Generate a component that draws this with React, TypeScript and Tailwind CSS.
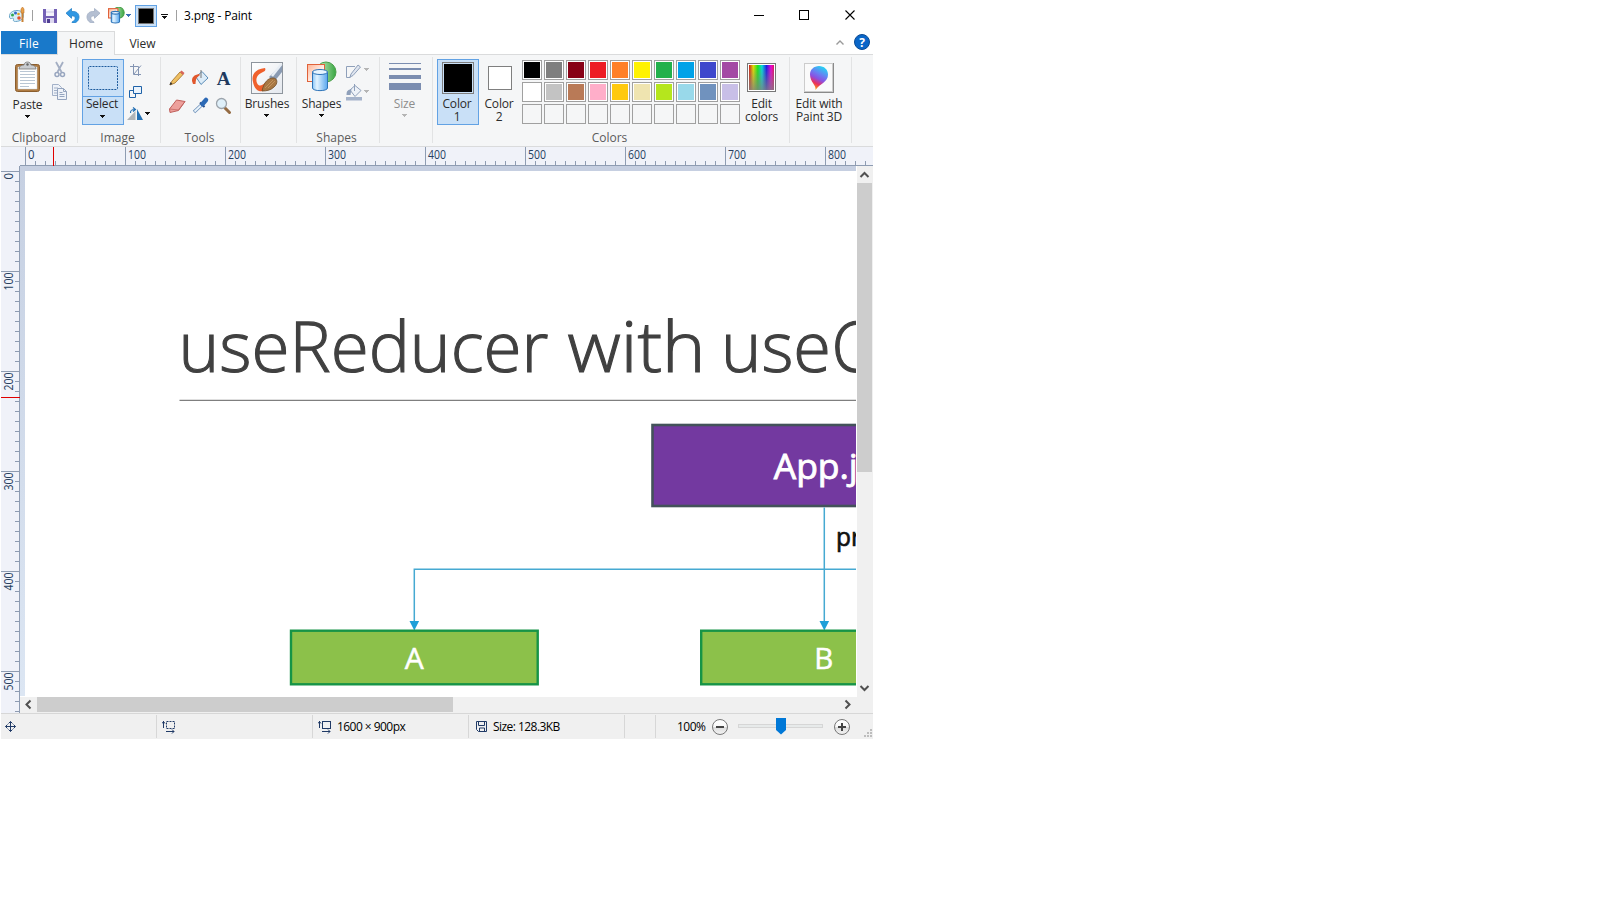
import React from "react";

type IconProps = { x: number; y: number; w: number; h: number; className?: string; children: React.ReactNode };

function Icon({ x, y, w, h, className = "", children }: IconProps) {
  return (
    <svg width={w} height={h} viewBox={`${x} ${y} ${w} ${h}`} fill="none" className={`block shrink-0 ${className}`}>
      {children}
    </svg>
  );
}

function Arrow({ className = "text-[#111]" }: { className?: string }) {
  return (
    <svg width="5" height="3" viewBox="0 0 5 3" className={`block shrink-0 ${className}`} shapeRendering="crispEdges">
      <path d="M0 0H5V1H4V2H3V3H2V2H1V1H0Z" fill="currentColor" />
    </svg>
  );
}

function Sep() {
  return <div className="mt-[2px] h-[86px] w-px shrink-0 bg-[#e2e3e4]" />;
}

function Group({ label, width, shift = "", children }: { label?: string; width: string; shift?: string; children: React.ReactNode }) {
  return (
    <div className={`flex h-[91px] shrink-0 flex-col ${width}`}>
      <div className="flex h-[75px] pt-[4px]">{children}</div>
      <div className={`h-[15px] text-center leading-[15px] text-[#5b5b5b] ${shift}`}>{label}</div>
    </div>
  );
}

function Caption({ children, className = "" }: { children: React.ReactNode; className?: string }) {
  return <div className={`flex flex-col items-center leading-[13px] tracking-[-0.15px] whitespace-nowrap ${className}`}>{children}</div>;
}

const palette: string[][] = [
  ["#000000", "#7f7f7f", "#880015", "#ed1c24", "#ff7f27", "#fff200", "#22b14c", "#00a2e8", "#3f48cc", "#a349a4"],
  ["#ffffff", "#c3c3c3", "#b97a57", "#ffaec9", "#ffc90e", "#efe4b0", "#b5e61d", "#99d9ea", "#7092be", "#c8bfe7"],
  ["", "", "", "", "", "", "", "", "", ""],
];

function ShapesGlyph() {
  return (
    <>
      <circle cx="326" cy="72" r="10" fill="url(#gGreen)" stroke="#4aa04a" />
      <rect x="307.500" y="64.500" width="17" height="17" fill="url(#gOrange)" stroke="#e0623a" />
      <path d="M312.500 72v16c0 3.500 15 3.500 15 0V72z" fill="url(#gBlue)" stroke="#2e74b8" />
      <ellipse cx="320" cy="72" rx="7.500" ry="2.500" fill="#e8f5ff" stroke="#2e74b8" />
    </>
  );
}

function Defs() {
  return (
    <defs>
      <linearGradient id="gGreen"><stop offset="0" stopColor="#d8f4cf" /><stop offset="1" stopColor="#37a642" /></linearGradient>
      <linearGradient id="gOrange" x2="1" y2="1"><stop offset="0" stopColor="#ffb394" /><stop offset=".6" stopColor="#fff3ee" /><stop offset="1" stopColor="#fff" /></linearGradient>
      <linearGradient id="gBlue"><stop offset="0" stopColor="#8bc6f7" /><stop offset=".3" stopColor="#e2f3ff" /><stop offset="1" stopColor="#58a7ee" /></linearGradient>
      <linearGradient id="gRainbow"><stop offset="0" stopColor="#d01818" /><stop offset=".17" stopColor="#e8e000" /><stop offset=".35" stopColor="#18e818" /><stop offset=".52" stopColor="#00dce0" /><stop offset=".7" stopColor="#1818e8" /><stop offset=".88" stopColor="#f000d8" /><stop offset="1" stopColor="#e01060" /></linearGradient>
      <linearGradient id="gGray" x2="0" y2="1"><stop offset="0" stopColor="#808080" stopOpacity="0" /><stop offset="1" stopColor="#808080" stopOpacity=".8" /></linearGradient>
      <linearGradient id="gPin" x1=".7" x2=".3" y2="1"><stop offset="0" stopColor="#20d8f4" /><stop offset=".35" stopColor="#6a7df2" /><stop offset=".55" stopColor="#8b50e0" /><stop offset=".75" stopColor="#e9305e" /><stop offset="1" stopColor="#ffb000" /></linearGradient>
      <linearGradient id="gBrush" x2="1" y2="1"><stop offset="0" stopColor="#fff" /><stop offset="1" stopColor="#e4e8ee" /></linearGradient>
      <linearGradient id="gBtn" x2="0" y2="1"><stop offset="0" stopColor="#fff" /><stop offset=".5" stopColor="#f8f8f8" /><stop offset=".5" stopColor="#dcdcdc" /><stop offset="1" stopColor="#f4f4f4" /></linearGradient>
    </defs>
  );
}

function TitleBar() {
  return (
    <div className="flex h-[31px] items-start">
      <Icon x={8} y={7} w={18} h={17} className="ml-[7px] mt-[7px]">
        <Defs />
        <path d="M9.500 17c-.5-4 3-6.500 7.500-6.500 4 0 6.500 2 6.500 5s-3 6-8 6c-2 0-2.500-1-2-2 .5-1.500-1-1.500-2-1-1.200.4-1.900-.3-2-1.500z" fill="#d9effa" stroke="#6aa5c8" />
        <circle cx="12.500" cy="15" r="1.500" fill="#2fa84f" /><circle cx="15.500" cy="13" r="1.500" fill="#3468c8" />
        <circle cx="18.500" cy="14" r="1.300" fill="#e8a51e" /><circle cx="19" cy="18" r="1.800" fill="#e2512d" />
        <path d="M22.500 13v9" stroke="#c98236" strokeWidth="2" /><path d="M21 13V9l1.500-2L24 9v4z" fill="#e7a14a" stroke="#c47427" strokeWidth=".6" />
      </Icon>
      <div className="ml-[6px] mt-[10px] h-[11px] w-px bg-[#a0a0a0]" />
      <Icon x={43} y={9} w={14} h={14} className="ml-[10px] mt-[9px]">
        <path d="M43 9h14v14H44l-1-1z" fill="#7461b5" /><path d="M46 9h8v7h-8z" fill="#f4f3fb" /><path d="M46 12h8" stroke="#c9c3e4" />
        <path d="M46 18h8v5h-8z" fill="#ddd8ef" /><path d="M47 19h3v4h-3z" fill="#4f3e91" />
      </Icon>
      <Icon x={65} y={8} w={15} h={15} className="ml-[8px] mt-[8px]">
        <path d="M66 13.200l5.500-4.700v3c5-.5 7.500 2 7.500 5.500s-2.500 6-6.500 6.200l-.5-1.200c2-1 3.200-2.200 3.200-3.800 0-1.700-1.200-2.400-3.700-2.400v2.500z" fill="#2f97e3" stroke="#2380c6" strokeWidth=".8" />
      </Icon>
      <Icon x={86} y={8} w={15} h={15} className="ml-[6px] mt-[8px]">
        <path d="M100 13.200l-5.500-4.700v3c-5-.5-7.500 2-7.500 5.500s2.500 6 6.500 6.200l.5-1.200c-2-1-3.200-2.200-3.200-3.800 0-1.700 1.200-2.400 3.700-2.400v2.500z" fill="#b4bfd2" stroke="#a1adc3" strokeWidth=".8" />
      </Icon>
      <svg width="17" height="17" viewBox="306.500 61.500 31 31" className="ml-[7px] mt-[7px] block shrink-0" strokeWidth="2" fill="none"><ShapesGlyph /></svg>
      <div className="ml-[1px] mt-[14px]"><Arrow className="text-[#3a6fb5]" /></div>
      <div className="ml-[4px] mt-[5px] flex h-[22px] w-[22px] items-center justify-center border border-[#62a2e4] bg-[#c9e0f7]">
        <div className="h-[16px] w-[16px] border border-[#777] bg-black" />
      </div>
      <div className="ml-[4px] mt-[14px] flex w-[7px] flex-col items-center gap-[1px]"><div className="h-px w-[7px] bg-[#111]" /><Arrow /></div>
      <div className="ml-[8px] mt-[10px] h-[11px] w-px bg-[#a0a0a0]" />
      <div className="ml-[7px] mt-[8px] leading-[16px] tracking-[-0.15px] text-black">3.png - Paint</div>
      <Icon x={753} y={9} w={103} h={12} className="ml-auto mr-[17px] mt-[9px]">
        <g stroke="#000" shapeRendering="crispEdges"><path d="M754 15.500h10" /><path d="M799.500 10.500h9v9h-9z" /></g>
        <path d="M845.500 10.500l9 9M854.500 10.500l-9 9" stroke="#000" strokeWidth="1.100" />
      </Icon>
    </div>
  );
}

function Tabs() {
  return (
    <div className="flex h-[24px] border-b border-[#dadbdc]">
      <div className="h-[23px] w-[56px] bg-[#1979ca] text-center leading-[25px] tracking-[0.2px] text-white">File</div>
      <div className="-mb-px h-[24px] w-[58px] border-x border-t border-[#dadbdc] bg-[#f5f6f7] text-center leading-[23px] text-[#2b2b2b]">Home</div>
      <div className="w-[55px] text-center leading-[25px] text-[#2b2b2b]">View</div>
      <Icon x={835} y={33} w={37} h={18} className="ml-auto mr-px mt-[2px]">
        <path d="M836.500 44.500l3.500-3.500 3.500 3.500" stroke="#9a9a9a" strokeWidth="1.400" />
        <circle cx="862" cy="42" r="7.500" fill="#0a66c8" stroke="#0a4b94" />
        <text x="862" y="46.500" textAnchor="middle" fontSize="12" fontWeight="700" fill="#fff">?</text>
      </Icon>
    </div>
  );
}

function Ribbon() {
  return (
    <div className="flex h-[92px] border-b border-[#dadbdc] bg-[#f5f6f7] text-[#2b2b2b]">
      <Group label="Clipboard" width="w-[76px]" shift="pr-0">
        <div className="ml-[6px] flex w-[41px] flex-col items-center">
          <Icon x={15} y={61} w={27} h={33} className="mt-[2px]">
            <rect x="16.500" y="64.500" width="24" height="27" rx="2" fill="#b07c43" stroke="#8b5e2e" />
            <path d="M19 67h19v22H19z" fill="#fff" stroke="#cbd5e0" strokeWidth=".5" />
            <path d="M21 71.500h15M21 74.500h15M21 77.500h15M21 80.500h15M21 83.500h15M21 86.500h9" stroke="#b9c6d4" />
            <path d="M20 69c0-3 3-4 5-4 0-4 7-4 7 0 2 0 5 1 5 4z" fill="#c9ccd0" stroke="#777" strokeWidth=".8" /><circle cx="28.500" cy="64.500" r="1.200" fill="#666" />
          </Icon>
          <Caption className="mt-[4px]">Paste</Caption>
          <div className="mt-[4px]"><Arrow /></div>
        </div>
        <div className="ml-[3px] flex flex-col">
          <Icon x={51} y={61} w={18} h={17} className="mt-[2px]">
            <path d="M56 62l5.500 10M63 62l-5.500 10" stroke="#a3aec3" strokeWidth="1.800" />
            <circle cx="57" cy="74.500" r="2" stroke="#98a6bf" strokeWidth="1.500" /><circle cx="62.500" cy="74.500" r="2" stroke="#98a6bf" strokeWidth="1.500" />
          </Icon>
          <Icon x={51} y={83} w={18} h={18} className="mt-[5px]">
            <path d="M52.500 84.500h6l3 3v8h-9z" fill="#eef2f8" stroke="#a3b1c8" /><path d="M54 88h4M54 90.500h5M54 93h4" stroke="#a3b1c8" />
            <path d="M57.500 88.500h6l3 3v8h-9z" fill="#eef2f8" stroke="#94a4be" /><path d="M63.500 88.500v3h3M59.500 92.500h3M59.500 94.500h5M59.500 96.500h5" stroke="#94a4be" />
          </Icon>
        </div>
      </Group>
      <Sep />
      <Group label="Image" width="w-[82px]" shift="pr-[3px]">
        <div className="ml-[4px] flex h-[66px] w-[42px] flex-col items-center border border-[#62a2e4] bg-[#c9e0f7]">
          <Icon x={88} y={66} w={30} h={24} className="mt-[6px]"><rect x="88.500" y="66.500" width="29" height="23" rx="1" stroke="#1c5a9c" strokeDasharray="2 1" /></Icon>
          <div className="mt-[6px] h-px w-full bg-[#62a2e4]" />
          <Caption className="mr-[2px]">Select</Caption>
          <div className="mr-px mt-[5px]"><Arrow /></div>
        </div>
        <div className="ml-[3px]">
          <Icon x={127} y={63} w={24} h={59} className="mt-[4px]">
            <path d="M133.500 64v10.500H141M130 66.500h8.500V76M134 74l7-8.500" stroke="#8495b3" />
            <path d="M133.500 86.500h8v7h-8z" fill="#eaf3fc" stroke="#1f62a8" /><path d="M133 90.500h-3.500v7h6v-3.500" stroke="#1f62a8" />
            <path d="M127 120l8.500-9v9z" fill="#b0b4b8" /><path d="M137 109v11h6z" fill="#2470b4" />
            <path d="M130.500 113c0-3 1-3.500 4-3.500M133 107.500l2.500 2-2.500 2" stroke="#2470b4" strokeWidth="1.200" />
            <path d="M145 112h5v1h-1v1h-1v1h-1v-1h-1v-1h-1z" fill="#111" />
          </Icon>
        </div>
      </Group>
      <Sep />
      <Group label="Tools" width="w-[79px]" shift="pr-[2px]">
        <Icon x={168} y={69} w={64} h={48} className="ml-[7px] mt-[9px]">
          <path d="M172 82l8-9 3 2.500-8 8.500-5 2z" fill="#efc063" stroke="#a9782f" strokeWidth=".9" /><path d="M180 73l1.500-1.500 3 2.500L183 76z" fill="#d8645a" /><path d="M169.500 86l1-3 2 2z" fill="#333" />
          <path d="M196 78l6-5.500 6 6.500-7 6.500z" fill="#dcecf8" stroke="#5b8db8" /><path d="M201 79v-8" stroke="#777" /><path d="M192 82c0-4 2-6 7-7l1 1c-4 3-4 4-4.500 9H193z" fill="#e1582d" />
          <text x="223.500" y="86" textAnchor="middle" fontSize="19" fontWeight="700" fill="#203a5f" className="font-['Liberation_Serif',serif]">A</text>
          <path d="M169.500 110l7-9 8.500 1.500-6.500 9-8.500 2z" fill="#eda09c" stroke="#c0605c" /><path d="M169.500 110l9 1 6.500-8.500" stroke="#c0605c" strokeWidth=".7" />
          <path d="M194 113l8-7.500" stroke="#7092ba" strokeWidth="3.500" /><path d="M194.500 112.500l7-6.500" stroke="#e9f4fc" strokeWidth="1.800" /><path d="M200 103.500l4.500 4.500" stroke="#274a86" strokeWidth="2" /><path d="M202.500 105l3.500-4" stroke="#2c69b5" strokeWidth="4.500" strokeLinecap="round" />
          <path d="M225 109l4.500 4.500" stroke="#946b43" strokeWidth="3" strokeLinecap="round" /><circle cx="221.500" cy="104.500" r="5" fill="#dff0fa" stroke="#9ca4ac" strokeWidth="1.300" />
        </Icon>
      </Group>
      <Sep />
      <Group width="w-[55px]">
        <div className="ml-[5px] flex w-[42px] flex-col items-center">
          <Icon x={251} y={62} w={32} h={32} className="mt-[3px]">
            <rect x="251.500" y="62.500" width="31" height="31" fill="url(#gBrush)" stroke="#8e959d" />
            <path d="M282 64L269 77l5 5 8-10z" fill="#8a9bb3" /><path d="M281.500 64l-9.500 12" stroke="#e8eef5" strokeWidth="2.500" />
            <path d="M265 68c-10 1-14 7-12 14 1 5 3 8 6 9 4 1 7-1 10-4l-3-5c-4 4-7 5-9 1-2-5 1-9 6-11 2-1 3-2 2-4z" fill="#f0602c" />
            <path d="M262 91c2-9 6-13 11-13s5 6 1 9c-3 3-7 4-12 4z" fill="#a87844" stroke="#704b25" strokeWidth=".8" /><path d="M265 88l8-8M268 88l7-7" stroke="#d0a16c" strokeWidth=".7" />
          </Icon>
          <Caption className="mt-[3px]">Brushes</Caption>
          <div className="mr-px mt-[4px]"><Arrow /></div>
        </div>
      </Group>
      <Sep />
      <Group label="Shapes" width="w-[82px]" shift="pl-[1px] pr-[4px]">
        <div className="ml-[4px] flex w-[41px] flex-col items-center">
          <Icon x={306} y={61} w={31} h={31} className="mt-[2px]"><ShapesGlyph /></Icon>
          <Caption className="mt-[5px]">Shapes</Caption>
          <div className="mt-[4px]"><Arrow /></div>
        </div>
        <Icon x={345} y={63} w={25} h={38} className="ml-[3px] mt-[4px]">
          <path d="M355 66.500h-8.500v11h4" stroke="#8fa0ba" /><path d="M350 77l1-3 7-9 2.500 2-7.500 8.500z" fill="#dfe5ef" stroke="#8fa0ba" />
          <path d="M346 97h16v3.500h-16z" fill="#a5b3ca" /><path d="M350 90l5-4.500 6 5-6 6z" fill="#eef2f8" stroke="#8fa0ba" /><path d="M354.500 91v-7" stroke="#8fa0ba" /><path d="M346.500 95c0-4 1-5 5-6l-1 6z" fill="#8fa0ba" />
          <path d="M364 68h5v1h-1v1h-1v1h-1v-1h-1v-1h-1zM364 90h5v1h-1v1h-1v1h-1v-1h-1v-1h-1z" fill="#b5b5b5" />
        </Icon>
      </Group>
      <Sep />
      <Group width="w-[52px]">
        <div className="ml-[4px] flex w-[41px] flex-col items-center text-[#8d8d8d]">
          <div className="mt-[4px] flex w-[32px] flex-col">
            <div className="h-px bg-[#7b8db0]" /><div className="mt-[4px] h-[2px] bg-[#7b8db0]" /><div className="mt-[5px] h-[4px] bg-[#7b8db0]" /><div className="mt-[4px] h-[7px] bg-[#7b8db0]" />
          </div>
          <Caption className="mt-[7px]">Size</Caption>
          <div className="mt-[4px]"><Arrow className="text-[#b5b5b5]" /></div>
        </div>
      </Group>
      <Sep />
      <Group label="Colors" width="w-[356px]" shift="pr-[3px]">
        <div className="ml-[4px] flex h-[66px] w-[42px] flex-col items-center border border-[#62a2e4] bg-[#c9e0f7]">
          <div className="mt-[2px] h-[32px] w-[32px] border border-[#7f7f7f] bg-[#c9e0f7] p-px"><div className="h-full w-full bg-black" /></div>
          <Caption className="mr-[2px] mt-[3px]"><span>Color</span><span>1</span></Caption>
        </div>
        <div className="flex h-[66px] w-[42px] flex-col items-center">
          <div className="mt-[7px] h-[24px] w-[24px] border border-[#7f7f7f] bg-white p-px" />
          <Caption className="mr-[2px] mt-[7px]"><span>Color</span><span>2</span></Caption>
        </div>
        <div className="ml-px mt-px grid grid-cols-[repeat(10,20px)] grid-rows-[repeat(3,20px)] gap-[2px]">
          {palette.flat().map((c, i) => (
            <div key={i} className="h-[20px] w-[20px] border border-[#a0a0a0] p-px" style={{ backgroundColor: c ? "#fff" : undefined }}>
              <div className="h-full w-full" style={{ backgroundColor: c || undefined }} />
            </div>
          ))}
        </div>
        <div className="ml-[3px] flex w-[38px] flex-col items-center">
          <Icon x={747} y={63} w={30} h={30} className="mt-[4px]">
            <path d="M747 63h29v29h-29z" fill="#777" /><path d="M748 64h27v27h-27z" fill="#fff" /><path d="M749 65h25v25h-25z" fill="url(#gRainbow)" /><path d="M749 65h25v25h-25z" fill="url(#gGray)" />
          </Icon>
          <Caption className="mr-px mt-[4px]"><span>Edit</span><span>colors</span></Caption>
        </div>
      </Group>
      <Sep />
      <Group width="w-[61px]">
        <div className="flex w-[58px] flex-col items-center">
          <Icon x={804} y={63} w={30} h={30} className="mt-[4px]">
            <path d="M804 63h30v30h-30z" fill="#8a8a8a" /><path d="M804 63h29v29h-29z" fill="#ccc" /><path d="M805 64h27v27h-27z" fill="#fafafa" />
            <path d="M815.500 90c1-5-5.500-8-5.500-15.500 0-5 4-8.500 9-8.500s9 3.500 9 8.500c0 8-8 8.500-12.500 15.500z" fill="url(#gPin)" />
          </Icon>
          <Caption className="mt-[4px]"><span>Edit with</span><span>Paint 3D</span></Caption>
        </div>
      </Group>
      <Sep />
    </div>
  );
}

const range = (n: number) => Array.from({ length: n }, (_, i) => i);

function HorizontalRuler() {
  return (
    <svg width="872" height="19" viewBox="1 147 872 19" className="block shrink-0 bg-[#f0f2f9]">
      <g shapeRendering="crispEdges">
        {range(85).map((i) => (
          <path key={i} d={`M${25.5 + i * 10} ${i % 10 ? 161 : 147}V165`} stroke="#8e9cb2" />
        ))}
        <path d="M20 165.500H873" stroke="#8e9cb2" />
        <path d="M53.500 147V166" stroke="#e00000" />
      </g>
      {range(9).map((i) => (
        <text key={i} x={28 + i * 100} y="159" fontSize="12" fill="#27405f" textLength={i ? 18 : 6.500} lengthAdjust="spacingAndGlyphs">{i * 100}</text>
      ))}
    </svg>
  );
}

function VerticalRuler() {
  return (
    <svg width="19" height="547" viewBox="1 166 19 547" className="block shrink-0 bg-[#f0f2f9]">
      <g shapeRendering="crispEdges">
        {range(55).map((i) => (
          <path key={i} d={`M${i % 10 ? 15 : 1} ${171.5 + i * 10}H19`} stroke="#8e9cb2" />
        ))}
        <path d="M19.500 166V713" stroke="#8e9cb2" />
        <path d="M1 397.500H20" stroke="#e00000" />
      </g>
      {range(6).map((i) => (
        <text key={i} transform={`translate(13 ${(i ? 290.5 : 179.5) + Math.max(0, i - 1) * 100}) rotate(-90)`} fontSize="12" fill="#27405f" textLength={i ? 18 : 6.500} lengthAdjust="spacingAndGlyphs">{i * 100}</text>
      ))}
    </svg>
  );
}

function Drawing() {
  return (
    <svg width="831" height="525" viewBox="25 171 831 525" className="block bg-white font-['Open_Sans',sans-serif]">
      <g fill="#404040" fontSize="70" fontWeight="300" stroke="#404040" strokeWidth="1.100">
        <text x="178.500" y="372" textLength="370" lengthAdjust="spacingAndGlyphs">useReducer</text>
        <text x="567.500" y="372" textLength="138" lengthAdjust="spacingAndGlyphs">with</text>
        <text x="721" y="372" textLength="110" lengthAdjust="spacingAndGlyphs">use</text>
        <text x="831.500" y="372" textLength="41" lengthAdjust="spacingAndGlyphs">C</text>
      </g>
      <path d="M179.500 400.300H856" stroke="#7f7f7f" strokeWidth="1.200" />
      <rect x="652.500" y="425" width="330" height="81" fill="#7339a0" stroke="#43525a" strokeWidth="2.600" />
      <text x="773.800" y="479" fontSize="35.500" fill="#fff" stroke="#fff" strokeWidth=".9" textLength="84" lengthAdjust="spacingAndGlyphs">App.j</text>
      <g stroke="#46a9d2" strokeWidth="1.500"><path d="M414.300 622V569.200H856M824.300 507.500V622" fill="none" /></g>
      <path d="M409.500 621h9.600l-4.800 9.500zM819.500 621h9.600l-4.800 9.500z" fill="#1f9fd8" />
      <text x="836" y="546" fontSize="26" fill="#111" stroke="#111" strokeWidth=".7" textLength="25" lengthAdjust="spacingAndGlyphs">pr</text>
      <g fill="#8cc14a" stroke="#169447" strokeWidth="2.400"><rect x="291" y="630.700" width="246.700" height="53.600" /><rect x="701.200" y="630.700" width="246" height="53.600" /></g>
      <g fill="#fff" stroke="#fff" strokeWidth=".5" fontSize="29"><text x="404.800" y="668.500" textLength="19" lengthAdjust="spacingAndGlyphs">A</text><text x="814.300" y="668.500" textLength="19" lengthAdjust="spacingAndGlyphs">B</text></g>
    </svg>
  );
}

function Workspace() {
  return (
    <div className="flex h-[547px]">
      <VerticalRuler />
      <div className="flex w-[837px] flex-col">
        <div className="flex h-[530px] w-[836px] flex-col bg-linear-to-b from-[#c6d0e2] to-[#dce6f3] pl-[5px]">
          <div className="-ml-[5px] h-[5px] bg-[#c6cfe1]" />
          <Drawing />
        </div>
        <div className="mt-px flex h-[16px] w-[837px] items-center bg-[#f0f0f0]">
          <Icon x={20} y={697} w={17} h={16}><path d="M30.500 700.500l-4 4 4 4" stroke="#505050" strokeWidth="2" /></Icon>
          <div className="-mt-px h-[15px] w-[416px] bg-[#cdcdcd]" />
          <Icon x={840} y={697} w={17} h={16} className="ml-auto"><path d="M845.500 700.500l4 4-4 4" stroke="#505050" strokeWidth="2" /></Icon>
        </div>
      </div>
      <div className="flex w-[16px] flex-col bg-[#f0f0f0]">
        <Icon x={857} y={166} w={16} h={17}><path d="M860.500 177l4-4 4 4" stroke="#505050" strokeWidth="2" /></Icon>
        <div className="h-[289px] w-[15px] bg-[#cdcdcd]" />
        <Icon x={857} y={679} w={16} h={18} className="mb-[16px] mt-auto"><path d="M860.500 686l4 4 4-4" stroke="#505050" strokeWidth="2" /></Icon>
      </div>
    </div>
  );
}

function StatusSep() {
  return <div className="mt-px h-[23px] w-px bg-[#d7d7d7]" />;
}

function StatusBar() {
  return (
    <div className="flex h-[26px] border-t border-[#d7d7d7] bg-[#f0f0f0] text-black">
      <div className="w-[155px] pl-[4px] pt-[7px]">
        <Icon x={5} y={721} w={12} h={12}><path d="M5.500 726.500h10M10.500 721.500v10M7.500 724.500l-2 2 2 2M13.500 724.500l2 2-2 2M8.500 723.500l2-2 2 2M8.500 729.500l2 2 2-2" stroke="#203a66" /></Icon>
      </div>
      <StatusSep />
      <div className="w-[155px] pl-[5px] pt-[7px]">
        <Icon x={162} y={721} w={14} h={13}><path d="M163.500 728v-7M162 723.500l1.500-2 1.500 2M166 731.500h8M172 729.500l2 2-2 2" stroke="#203a66" /><rect x="166.500" y="721.500" width="8" height="7" stroke="#203a66" strokeDasharray="2 1" /></Icon>
      </div>
      <StatusSep />
      <div className="flex w-[155px] pl-[5px] pt-[7px]">
        <Icon x={318} y={721} w={14} h={13}><path d="M319.500 728v-7M318 723.500l1.500-2 1.500 2M322 731.500h8M328 729.500l2 2-2 2" stroke="#203a66" /><rect x="322.500" y="721.500" width="8" height="7" stroke="#203a66" /></Icon>
        <span className="ml-[5px] whitespace-nowrap leading-[12px] tracking-[-0.55px]">1600 × 900px</span>
      </div>
      <StatusSep />
      <div className="flex w-[155px] pl-[7px] pt-[7px]">
        <Icon x={476} y={721} w={11} h={11}><path d="M476.500 721.500h10v10h-8l-2-2z" stroke="#203a66" /><path d="M478.500 721.500v4h6v-4M479.500 731v-3h5v3" stroke="#203a66" /></Icon>
        <span className="ml-[6px] whitespace-nowrap leading-[12px] tracking-[-0.55px]">Size: 128.3KB</span>
      </div>
      <StatusSep />
      <div className="w-[30px]" />
      <StatusSep />
      <span className="ml-[21px] w-[34px] whitespace-nowrap pt-[7px] leading-[12px] tracking-[-0.5px]">100%</span>
      <Icon x={711} y={714} w={161} h={25}>
        <circle cx="720" cy="727" r="7.500" fill="url(#gBtn)" stroke="#777" /><path d="M716 727h8" stroke="#444" strokeWidth="2" />
        <rect x="738.500" y="724.500" width="84" height="3" fill="#e7eaea" stroke="#d6d6d6" />
        <path d="M776 718h10v12l-5 4.500-5-4.500z" fill="#0078d7" />
        <circle cx="842" cy="727" r="7.500" fill="url(#gBtn)" stroke="#777" /><path d="M838 727h8M842 723v8" stroke="#444" strokeWidth="2" />
        <path d="M870 729h2v2h-2zM867 732h2v2h-2zM870 732h2v2h-2zM864 735h2v2h-2zM867 735h2v2h-2zM870 735h2v2h-2z" fill="#bdbdbd" />
      </Icon>
    </div>
  );
}

export default function App() {
  return (
    <div className="h-[900px] w-[1600px] overflow-hidden bg-white pl-px font-['Open_Sans',sans-serif] text-[12px]">
      <div className="flex w-[872px] flex-col">
        <TitleBar />
        <Tabs />
        <Ribbon />
        <HorizontalRuler />
        <Workspace />
        <StatusBar />
      </div>
    </div>
  );
}
